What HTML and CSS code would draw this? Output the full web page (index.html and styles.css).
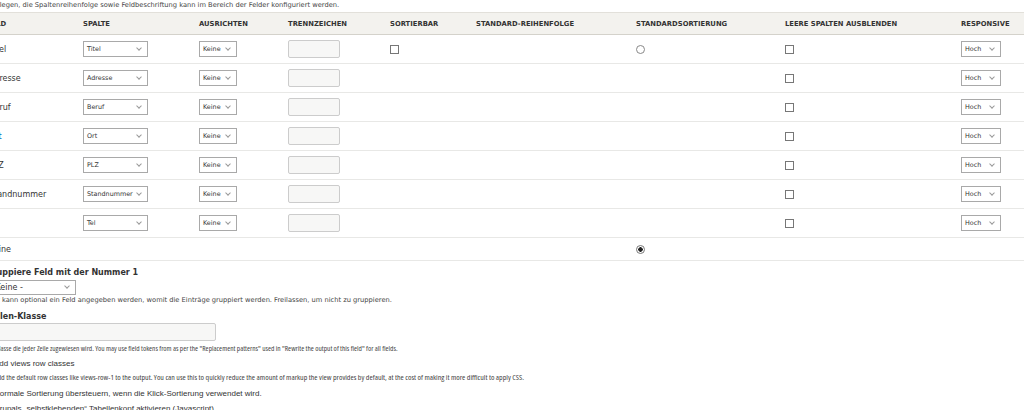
FILE: index.html
```html
<!DOCTYPE html>
<html lang="de">
<head>
  <meta charset="UTF-8">
  <title>Tabelleneinstellungen</title>
  <link rel="stylesheet" href="styles.css">
</head>
<body>
  <div class="page">
    <p class="intro">Festlegen, die Spaltenreihenfolge sowie Feldbeschriftung kann im Bereich der Felder konfiguriert werden.</p>

    <table class="style-table">
      <colgroup>
        <col style="width: 96px">
        <col style="width: 116px">
        <col style="width: 89px">
        <col style="width: 102px">
        <col style="width: 86px">
        <col style="width: 160px">
        <col style="width: 149px">
        <col style="width: 176px">
        <col style="width: 90px">
      </colgroup>
      <thead>
        <tr>
          <th>Feld</th>
          <th>Spalte</th>
          <th>Ausrichten</th>
          <th>Trennzeichen</th>
          <th>Sortierbar</th>
          <th>Standard-Reihenfolge</th>
          <th>Standardsortierung</th>
          <th>Leere Spalten ausblenden</th>
          <th>Responsive</th>
        </tr>
      </thead>
      <tbody>
        <tr>
          <td>Titel</td>
          <td><span class="select wide">Titel</span></td>
          <td><span class="select narrow">Keine</span></td>
          <td><span class="text-input"></span></td>
          <td><span class="checkbox"></span></td>
          <td></td>
          <td><span class="radio"></span></td>
          <td><span class="checkbox"></span></td>
          <td><span class="select resp">Hoch</span></td>
        </tr>
        <tr>
          <td>Adresse</td>
          <td><span class="select wide">Adresse</span></td>
          <td><span class="select narrow">Keine</span></td>
          <td><span class="text-input"></span></td>
          <td></td>
          <td></td>
          <td></td>
          <td><span class="checkbox"></span></td>
          <td><span class="select resp">Hoch</span></td>
        </tr>
        <tr>
          <td>Beruf</td>
          <td><span class="select wide">Beruf</span></td>
          <td><span class="select narrow">Keine</span></td>
          <td><span class="text-input"></span></td>
          <td></td>
          <td></td>
          <td></td>
          <td><span class="checkbox"></span></td>
          <td><span class="select resp">Hoch</span></td>
        </tr>
        <tr>
          <td class="link">Ort</td>
          <td><span class="select wide">Ort</span></td>
          <td><span class="select narrow">Keine</span></td>
          <td><span class="text-input"></span></td>
          <td></td>
          <td></td>
          <td></td>
          <td><span class="checkbox"></span></td>
          <td><span class="select resp">Hoch</span></td>
        </tr>
        <tr>
          <td>PLZ</td>
          <td><span class="select wide">PLZ</span></td>
          <td><span class="select narrow">Keine</span></td>
          <td><span class="text-input"></span></td>
          <td></td>
          <td></td>
          <td></td>
          <td><span class="checkbox"></span></td>
          <td><span class="select resp">Hoch</span></td>
        </tr>
        <tr>
          <td>Standnummer</td>
          <td><span class="select wide">Standnummer</span></td>
          <td><span class="select narrow">Keine</span></td>
          <td><span class="text-input"></span></td>
          <td></td>
          <td></td>
          <td></td>
          <td><span class="checkbox"></span></td>
          <td><span class="select resp">Hoch</span></td>
        </tr>
        <tr>
          <td class="link-light">Tel</td>
          <td><span class="select wide">Tel</span></td>
          <td><span class="select narrow">Keine</span></td>
          <td><span class="text-input"></span></td>
          <td></td>
          <td></td>
          <td></td>
          <td><span class="checkbox"></span></td>
          <td><span class="select resp">Hoch</span></td>
        </tr>
        <tr class="none-row">
          <td>Keine</td>
          <td></td>
          <td></td>
          <td></td>
          <td></td>
          <td></td>
          <td><span class="radio checked"></span></td>
          <td></td>
          <td></td>
        </tr>
      </tbody>
    </table>

    <div class="form-item first">
      <label class="label">Gruppiere Feld mit der Nummer 1</label>
      <span class="select group">- Keine -</span>
      <div class="description">Hier kann optional ein Feld angegeben werden, womit die Einträge gruppiert werden. Freilassen, um nicht zu gruppieren.</div>
    </div>

    <div class="form-item second">
      <label class="label">Zeilen-Klasse</label>
      <span class="text-input long"></span>
      <div class="description narrow-font">Die Klasse die jeder Zeile zugewiesen wird. You may use field tokens from as per the "Replacement patterns" used in "Rewrite the output of this field" for all fields.</div>
    </div>

    <div class="form-item check-item">
      <div class="check-label"><span class="checkbox"></span>Add views row classes</div>
      <div class="description narrow-font">Add the default row classes like views-row-1 to the output. You can use this to quickly reduce the amount of markup the view provides by default, at the cost of making it more difficult to apply CSS.</div>
    </div>

    <div class="form-item check-item override">
      <div class="check-label"><span class="checkbox"></span>Normale Sortierung übersteuern, wenn die Klick-Sortierung verwendet wird.</div>
    </div>

    <div class="form-item check-item sticky">
      <div class="check-label"><span class="checkbox"></span>Drupals „selbstklebenden“ Tabellenkopf aktivieren (Javascript)</div>
    </div>
  </div>
</body>
</html>
```

FILE: styles.css
```css
body {
  margin: 0;
  background: #fff;
  color: #333;
  font-family: "DejaVu Sans", Verdana, sans-serif;
  font-size: 8px;
  overflow: hidden;
}

.page {
  margin-left: -18px;
  width: 1062px;
}

.intro {
  margin: 0 0 2px 0;
  padding-left: 4px;
  font-size: 6.7px;
  line-height: 10px;
  color: #444;
}

.style-table {
  width: 1062px;
  table-layout: fixed;
  border-collapse: collapse;
}

.style-table th {
  background: #f3f2ee;
  border-top: 1px solid #e2e0da;
  border-bottom: 1px solid #d4d2cb;
  height: 21px;
  padding: 0 0 0 5px;
  text-align: left;
  text-transform: uppercase;
  font-size: 6.8px;
  font-weight: bold;
  color: #333;
}

.style-table td {
  height: 28px;
  padding: 0 0 0 5px;
  border-bottom: 1px solid #e8e8e6;
  vertical-align: middle;
}

.style-table td:first-child {
  padding-left: 7px;
}

.style-table .none-row td {
  height: 22px;
}

.link {
  color: #0074bd;
}

.link-light {
  color: #3cc0ef;
}

.select {
  display: inline-block;
  box-sizing: border-box;
  height: 16px;
  line-height: 14px;
  padding: 0 12px 0 3px;
  border: 1px solid #a9a9a9;
  background: #fff;
  position: relative;
  vertical-align: middle;
  white-space: nowrap;
  font-size: 6.4px;
}

.select::after {
  content: "";
  position: absolute;
  right: 6px;
  top: 4px;
  width: 3px;
  height: 3px;
  border-right: 1px solid #999;
  border-bottom: 1px solid #999;
  transform: rotate(45deg);
}

.select.wide {
  width: 65px;
}

.select.narrow {
  width: 38px;
}

.select.resp {
  width: 40px;
}

.select.group {
  display: block;
  width: 90px;
  height: 15px;
  line-height: 13px;
  font-size: 8px;
}

.select.group::after {
  top: 3px;
}

.text-input {
  display: inline-block;
  box-sizing: border-box;
  width: 52px;
  height: 18px;
  border: 1px solid #ccc;
  border-radius: 2px;
  background: #f7f7f6;
  vertical-align: middle;
}

.text-input.long {
  display: block;
  width: 230px;
  height: 18px;
}

.checkbox {
  display: inline-block;
  box-sizing: border-box;
  width: 9px;
  height: 9px;
  border: 1px solid #777;
  background: #fff;
  vertical-align: middle;
}

.radio {
  display: inline-block;
  box-sizing: border-box;
  width: 9px;
  height: 9px;
  border: 1px solid #888;
  border-radius: 50%;
  background: #fff;
  vertical-align: middle;
}

.radio.checked {
  background: radial-gradient(circle, #222 0 2px, #fff 2.5px);
  border-color: #777;
}

.form-item {
  padding-left: 4px;
}

.form-item.first {
  margin-top: 6px;
}

.form-item.second {
  margin-top: 6px;
}

.label {
  display: block;
  font-weight: bold;
  line-height: 12px;
  margin-bottom: 1px;
}

.second .label {
  margin-bottom: 0;
}

.description {
  font-size: 6.7px;
  line-height: 10px;
  color: #444;
}

.narrow-font {
  font-family: "Open Sans", "Liberation Sans", Arial, sans-serif;
  font-stretch: 75%;
  font-size: 7.4px;
  margin-top: 2px;
}

.check-item {
  margin-left: -7px;
  margin-top: 5px;
}

.check-item .narrow-font {
  font-size: 7.9px;
}

.check-item.override {
  margin-top: 6px;
}

.check-item.sticky {
  margin-top: 3px;
}

.check-label {
  font-family: "Liberation Sans", Arial, sans-serif;
  font-size: 8px;
  line-height: 12px;
}

.check-label .checkbox {
  margin-right: 6px;
}

.check-item .description {
  padding-left: 15px;
}
```
